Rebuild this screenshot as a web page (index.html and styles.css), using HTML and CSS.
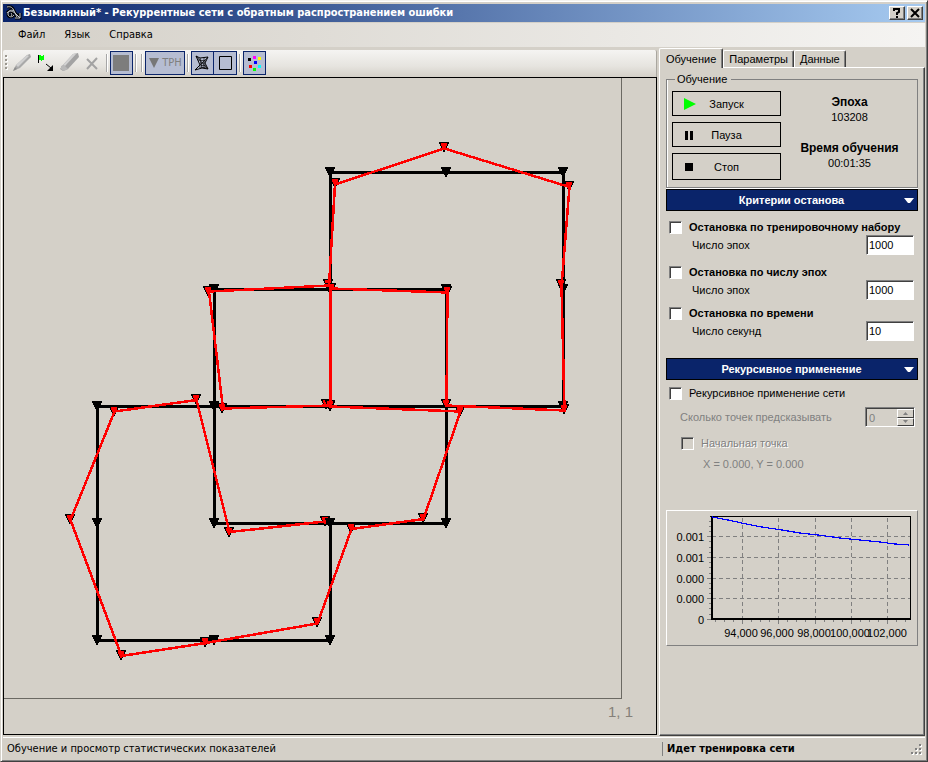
FILE: index.html
```html
<!DOCTYPE html>
<html lang="ru">
<head>
<meta charset="utf-8">
<title>Безымянный* - Рекуррентные сети с обратным распространением ошибки</title>
<link rel="stylesheet" href="styles.css">
</head>
<body>
<div class="window">
  <header class="titlebar">
    <svg class="app-icon" width="16" height="16" viewBox="0 0 16 16" fill="none" stroke="#000" stroke-width="3"><path id="swirl" d="M1 2c4-1 6 1 7 4l3 6M1 8c2-3 5-2 8 0M8 6c-3-2-6 0-6 3s4 4 6 1M5 8c1 1 1 2 0 3M9 8l5 5M14 8v5H9"/><use href="#swirl" stroke="#c8ccd4" stroke-width="1"/></svg>
    <h1 class="title">Безымянный* - Рекуррентные сети с обратным распространением ошибки</h1>
    <button class="caption-btn" type="button" aria-label="Справка"><svg width="12" height="10" viewBox="0 0 12 10" fill="none" stroke="#000" stroke-width="2"><path d="M3 3V1h5v3L6 5v2M5 9h2"/></svg></button>
    <button class="caption-btn" type="button" aria-label="Закрыть"><svg width="12" height="10" viewBox="0 0 12 10" stroke="#000" stroke-width="2"><path d="M2 1l8 8M10 1L2 9"/></svg></button>
  </header>
  <nav class="menubar">
    <button type="button">Файл</button>
    <button type="button">Язык</button>
    <button type="button">Справка</button>
  </nav>
  <main class="content">
    <section class="workspace">
      <div class="toolbar">
        <svg class="grip" width="4" height="18" viewBox="0 0 4 18"><path d="M2 2v15" stroke="#fff" stroke-width="2" stroke-dasharray="2 2"/><path d="M1 1v15" stroke="#9a978f" stroke-width="2" stroke-dasharray="2 2"/></svg>
        <button class="tool plain" type="button" aria-label="Карандаш"><svg width="24" height="24" viewBox="0 0 24 24"><path d="M3 20l3-6L17 4l3-1 1 3L10 17z" fill="#a9a9a9"/><path d="M6 14L17 4l2 1L8 16z" fill="#d0d0d0"/><path d="M3 20l2-4 2 2z" fill="#8d8d8d"/></svg></button>
        <button class="tool plain" type="button" aria-label="Начальная точка"><svg width="24" height="24" viewBox="0 0 24 24"><path d="M4.500 4v8" stroke="#000" fill="none"/><path d="M5 4h2v1h2V4h1v5H8v1H7V9H5z" fill="#0f0"/><path d="M12 13l5 4" stroke="#000" stroke-width="1"/><path d="M19 14v6h-6z"/></svg></button>
        <button class="tool plain" type="button" aria-label="Ластик"><svg width="24" height="24" viewBox="0 0 24 24"><path d="M4 15L15 3l5-1 1 4-11 12-5 2-3-2z" fill="#a3a3a3"/><path d="M5 14L15 3l4-1-12 13z" fill="#d2d2d2"/><path d="M3 15l3-1 4 4-4 2-3-2z" fill="#b9b9b9"/></svg></button>
        <button class="tool plain narrow" type="button" aria-label="Удалить"><svg width="16" height="24" viewBox="0 0 16 24"><path d="M2 8l10 10M12 7L2 18" stroke="#a3a3a3" stroke-width="2"/></svg></button>
        <span class="sep"></span>
        <button class="tool" type="button" aria-label="Заливка"><svg width="21" height="22" viewBox="0 0 21 22"><path d="M2 3h16v16H2z" fill="#7d7d7d"/></svg></button>
        <span class="sep"></span><span class="sep"></span>
        <button class="tool wide" type="button"><svg width="12" height="12" viewBox="0 0 12 12"><path d="M1 1h10L6 11z" fill="#777"/></svg><span>ТРН</span></button>
        <span class="sep"></span>
        <button class="tool" type="button" aria-label="Сеть"><svg width="21" height="22" viewBox="0 0 21 22" fill="none" stroke="#000"><path d="M4 4l4 2 8-1-3 6 3 6-6-1-7 2 5-5z"/><path stroke-width=".7" d="M4 4l12 13M16 5L3 18M8 6l2 10M12 6v10M8 13l6 1M6 8l8 1M7 15l8 1M8 11l5 0"/></svg></button>
        <button class="tool joined" type="button" aria-label="Рамка"><svg width="21" height="22" viewBox="0 0 21 22"><path d="M4.500 4.500h12v13h-12z" fill="none" stroke="#000"/></svg></button>
        <span class="sep"></span>
        <button class="tool" type="button" aria-label="Цвета"><svg width="21" height="22" viewBox="0 0 21 22"><path d="M4 6h3v3H4z"/><path d="M9 4h3v3H9z" fill="#f0f"/><path d="M14 5h3v3h-3z" fill="#ff0"/><path d="M10 9h3v3h-3z" fill="#00f"/><path d="M5 13h3v3H5z" fill="red"/><path d="M14 13h3v3h-3z" fill="#0ff"/><path d="M9 16h3v3H9z" fill="#0f0"/></svg></button>
      </div>
      <svg class="plot" viewBox="4 78 652 656" preserveAspectRatio="xMinYMin meet" role="img" aria-label="Траектории сети">
        <defs><path id="mark" d="M-5-4.500h9L-.5 5z"/></defs>
        <path d="M621.500 78v620.500H4" fill="none" stroke="#6b6963"/>
        <text x="608" y="717" class="plot-label">1, 1</text>
        <g fill="none" stroke="#000" stroke-width="3">
          <path d="M330.500 289.500v-117h233v234h-466v234h233v-117M214.500 289.500h232v234h-232zM330.500 289.500v117"/>
        </g>
        <g stroke="#000">
          <use href="#mark" x="330.500" y="172"/><use href="#mark" x="446.500" y="172"/><use href="#mark" x="563.500" y="172"/>
          <use href="#mark" x="214.500" y="289"/><use href="#mark" x="330.500" y="289"/><use href="#mark" x="446.500" y="289"/><use href="#mark" x="563.500" y="289"/>
          <use href="#mark" x="97.500" y="406"/><use href="#mark" x="214.500" y="406"/><use href="#mark" x="330.500" y="406"/><use href="#mark" x="563.500" y="406"/>
          <use href="#mark" x="97.500" y="523"/><use href="#mark" x="214.500" y="523"/><use href="#mark" x="446.500" y="523"/>
          <use href="#mark" x="97.500" y="640"/><use href="#mark" x="330.500" y="640"/>
        </g>
        <g stroke="#000" fill="red">
          <use href="#mark" x="444.500" y="147"/><use href="#mark" x="335.500" y="183"/><use href="#mark" x="569.500" y="186"/>
          <use href="#mark" x="561.500" y="284"/><use href="#mark" x="328.500" y="284"/><use href="#mark" x="331.500" y="288"/>
          <use href="#mark" x="447.500" y="291"/><use href="#mark" x="208.500" y="291"/>
          <use href="#mark" x="222.500" y="408"/><use href="#mark" x="326.500" y="404"/><use href="#mark" x="330.500" y="405"/>
          <use href="#mark" x="446.500" y="404"/><use href="#mark" x="564.500" y="409"/><use href="#mark" x="460.500" y="411"/>
          <use href="#mark" x="196.500" y="399"/><use href="#mark" x="114.500" y="411"/><use href="#mark" x="70.500" y="519"/>
          <use href="#mark" x="121.500" y="655"/><use href="#mark" x="205.500" y="642"/><use href="#mark" x="317.500" y="622"/>
          <use href="#mark" x="351.500" y="528"/><use href="#mark" x="423.500" y="518"/><use href="#mark" x="325.500" y="521"/>
          <use href="#mark" x="229.500" y="532"/>
        </g>
        <g stroke="#000"><use href="#mark" x="330.500" y="523"/><use href="#mark" x="214.500" y="640"/></g>
        <path fill="none" stroke="red" stroke-width="2.500" d="M325 521.500l-95.500 10.500-33-132-82 11.500-44 108.500 51 136 84-13 112-19.500 34-94.500 72-10 37-107.500-130-5v-118l117 4-1 113 118 5-3-124 8-99.500-125-38.500-109.500 36-6 101-120 6 14 117 108-3"/>
      </svg>
    </section>

    <aside class="side">
      <div class="tabs" role="tablist">
        <button class="tab active" type="button" role="tab" aria-selected="true">Обучение</button>
        <button class="tab" type="button" role="tab" aria-selected="false">Параметры</button>
        <button class="tab" type="button" role="tab" aria-selected="false">Данные</button>
      </div>
      <div class="page" role="tabpanel">
        <fieldset class="training">
          <legend>Обучение</legend>
          <div class="commands">
            <button type="button"><svg width="12" height="12" viewBox="0 0 12 12"><path d="M0 0l12 6-12 6z" fill="#0f0"/></svg><span>Запуск</span></button>
            <button type="button"><svg width="12" height="12" viewBox="0 0 12 12"><path d="M1 2h3v9H1zM6 2h3v9H6z"/></svg><span>Пауза</span></button>
            <button type="button" class="tall"><svg width="12" height="12" viewBox="0 0 12 12"><path d="M1 2h8v8H1z"/></svg><span>Стоп</span></button>
          </div>
          <dl class="stats">
            <dt>Эпоха</dt><dd>103208</dd>
            <dt>Время обучения</dt><dd>00:01:35</dd>
          </dl>
        </fieldset>

        <button class="section" type="button"><span>Критерии останова</span><svg width="10" height="7" viewBox="0 0 10 7"><path d="M0 1h10L6 6H4z" fill="#fff"/></svg></button>
        <div class="criteria">
          <div class="criterion">
            <label class="check bold"><input type="checkbox">Остановка по тренировочному набору</label>
            <div class="param"><label for="n1">Число эпох</label><input id="n1" type="text" value="1000"></div>
          </div>
          <div class="criterion short">
            <label class="check bold"><input type="checkbox">Остановка по числу эпох</label>
            <div class="param"><label for="n2">Число эпох</label><input id="n2" type="text" value="1000"></div>
          </div>
          <div class="criterion short">
            <label class="check bold"><input type="checkbox">Остановка по времени</label>
            <div class="param"><label for="n3">Число секунд</label><input id="n3" type="text" value="10"></div>
          </div>
        </div>

        <button class="section" type="button"><span>Рекурсивное применение</span><svg width="10" height="7" viewBox="0 0 10 7"><path d="M0 1h10L6 6H4z" fill="#fff"/></svg></button>
        <div class="recursive">
          <label class="check"><input type="checkbox">Рекурсивное применение сети</label>
          <div class="predict">
            <label for="count">Сколько точек предсказывать</label>
            <div class="spinner">
              <input id="count" type="text" value="0" disabled>
              <div class="steps">
                <button type="button" disabled aria-label="Больше"><svg width="5" height="3" viewBox="0 0 5 3"><path d="M0 3L2.500 0 5 3z" fill="#808080"/></svg></button>
                <button type="button" disabled aria-label="Меньше"><svg width="5" height="3" viewBox="0 0 5 3"><path d="M0 0l2.500 3L5 0z" fill="#808080"/></svg></button>
              </div>
            </div>
          </div>
          <label class="check origin"><input type="checkbox" disabled>Начальная точка</label>
          <p class="coords">X = 0.000, Y = 0.000</p>
        </div>

        <div class="chart">
          <svg viewBox="667 511 250 134" role="img" aria-label="График ошибки">
            <path d="M712 536.500h198M712 557.500h198M712 578.500h198M712 598.500h198M742.500 518v100M778.500 518v100M815.500 518v100M851.500 518v100M887.500 518v100" stroke="#808080" stroke-dasharray="4 3" fill="none"/>
            <path d="M707 536.500h4M707 557.500h4M707 578.500h4M707 598.500h4M707 619.500h4M742.500 620v4M778.500 620v4M815.500 620v4M851.500 620v4M887.500 620v4" stroke="#808080" fill="none"/>
            <path d="M715.500 620v2M724.500 620v2M733.500 620v2M751.500 620v2M760.500 620v2M769.500 620v2M787.500 620v2M796.500 620v2M805.500 620v2M824.500 620v2M833.500 620v2M842.500 620v2M860.500 620v2M869.500 620v2M878.500 620v2M896.500 620v2M905.500 620v2M709 521.500h2M709 526.500h2M709 531.500h2M709 541.500h2M709 547.500h2M709 552.500h2M709 562.500h2M709 567.500h2M709 573.500h2M709 583.500h2M709 588.500h2M709 593.500h2M709 603.500h2M709 608.500h2M709 614.500h2" stroke="#808080"/>
            <path d="M710 516.500h200.500V620" fill="none" stroke="#000"/>
            <path d="M711.500 516v102.500h199.500" fill="none" stroke="#000" stroke-width="2"/>
            <path d="M712 517l16 3 18 4 16 3 20 3 18 3 18 2 22 3 20 2 20 2 15 2 14 1" fill="none" stroke="#00f" stroke-width="1.200"/>
            <g text-anchor="end"><text x="704" y="541">0.001</text><text x="704" y="562">0.001</text><text x="704" y="583">0.000</text><text x="704" y="603">0.000</text><text x="704" y="624">0</text></g>
            <g text-anchor="middle"><text x="741" y="637">94,000</text><text x="777" y="637">96,000</text><text x="814" y="637">98,000</text><text x="850" y="637">100,000</text><text x="887" y="637">102,000</text></g>
          </svg>
        </div>
      </div>
    </aside>
  </main>
  <footer class="status">
    <span class="hint">Обучение и просмотр статистических показателей</span>
    <strong class="state">Идет тренировка сети</strong>
    <svg class="resize" width="12" height="12" viewBox="0 0 12 12"><path d="M9 1h2v2H9zM9 5h2v2H9zM5 5h2v2H5zM9 9h2v2H9zM5 9h2v2H5zM1 9h2v2H1z" fill="#fff"/><path d="M8 0h2v2H8zM8 4h2v2H8zM4 4h2v2H4zM8 8h2v2H8zM4 8h2v2H4zM0 8h2v2H0z" fill="#808080"/></svg>
  </footer>
</div>
</body>
</html>
```
FILE: styles.css
```css
:root {
  --face: #d4d0c8;
  --shade: #808080;
  --dark: #404040;
  --navy: #0a246a;
  --ui: "DejaVu Sans Condensed", "DejaVu Sans", sans-serif;
  --form: "Liberation Sans", Arial, sans-serif;
}
* { box-sizing: border-box; }
body {
  margin: 0;
  background: var(--face);
  color: #000;
  font: 11px/14px var(--form);
}
button, input { font: inherit; color: inherit; margin: 0; padding: 0; border-radius: 0; }
button { background: none; border: 0; }
svg { display: block; }

.window {
  min-height: 100vh;
  display: flex;
  flex-direction: column;
  padding: 1px 2px 1px 1px;
  border: 1px solid var(--face);
  border-top-color: #f4f3f0;
  border-right-color: var(--dark);
  border-bottom-color: var(--dark);
  border-left-color: var(--face);
  box-shadow: inset 1px 1px #fff, inset -1px -1px var(--shade);
}
.window > * { margin-left: 1px; }

/* Title bar */
.titlebar {
  margin-top: 2px;
  height: 18px;
  display: flex;
  align-items: center;
  gap: 1px;
  padding: 0 2px 0 3px;
  background: linear-gradient(90deg, var(--navy), #a6caf0);
}
.title {
  flex: 1;
  margin: 0;
  color: #fff;
  font: bold 11px/14px var(--ui);
  white-space: nowrap;
}
.caption-btn {
  width: 16px;
  height: 14px;
  display: grid;
  place-items: center;
  background: var(--face);
  border: 1px solid;
  border-color: #fff var(--dark) var(--dark) #fff;
  box-shadow: inset -1px -1px var(--shade);
}
.caption-btn + .caption-btn { margin-left: 1px; }

/* Menu */
.menubar {
  margin-top: 1px;
  height: 24px;
  display: flex;
  align-items: center;
  gap: 19px;
  padding-left: 15px;
  background: linear-gradient(90deg, var(--face), #f5f4f2);
  font-family: var(--ui);
}

.content { flex: 1; display: flex; gap: 2px; padding-bottom: 1px; }
.workspace { flex: 1; min-width: 0; display: flex; flex-direction: column; padding: 3px 0 1px; }

/* Toolbar */
.toolbar {
  height: 27px;
  display: flex;
  align-items: center;
  padding: 0 0 1px 2px;
  background: linear-gradient(#f5f4f2, #e6e4df 60%, #d4d0c8);
  border-right: 1px solid #a9a69f;
  border-radius: 2px 2px 0 0;
}
.grip { margin-right: 1px; }
.tool {
  width: 23px;
  height: 24px;
  display: flex;
  align-items: center;
  justify-content: center;
  background: #b6bdd2;
  border: 1px solid var(--navy);
}
.tool.plain { width: 24px; background: none; border: 0; }
.tool.narrow { width: 22px; }
.tool.wide { width: 40px; gap: 2px; color: #808080; }
.tool.wide span { font-family: var(--ui); }
.tool.joined { border-left: 0; }
.sep {
  width: 2px;
  height: 18px;
  margin: 0 2px;
  border-left: 1px solid #a6a6a6;
  border-right: 1px solid #fff;
}
.plot { flex: 1; width: 100%; min-height: 0; border: 1px solid #000; shape-rendering: crispEdges; }
.plot-label { font: 15px var(--form); fill: #858079; }

/* Tabs */
.side { width: 266px; display: flex; flex-direction: column; }
.tabs { display: flex; align-items: flex-end; height: 19px; margin-top: 1px; }
.tab {
  height: 17px;
  padding: 0 5px;
  border: 1px solid;
  border-color: #fff var(--dark) transparent #fff;
  border-bottom: 0;
  border-radius: 2px 2px 0 0;
  box-shadow: inset -1px 0 var(--shade);
}
.tab.active { height: 20px; padding: 0 6px; margin-bottom: -1px; position: relative; background: var(--face); }
.page {
  flex: 1;
  padding: 4px 6px 0;
  border: 1px solid;
  border-color: #fff var(--dark) var(--dark) #fff;
  box-shadow: inset -1px -1px var(--shade);
}

/* Training group */
.training {
  margin: 0;
  min-width: 0;
  padding: 5px 5px 7px;
  display: flex;
  border: 1px solid var(--shade);
  box-shadow: inset 1px 0 #fff, 0 1px #fff;
}
.training legend { margin-left: 3px; padding: 0 4px 0 2px; }
.commands { width: 109px; display: grid; gap: 6px; }
.commands button {
  height: 25px;
  display: grid;
  grid-template-columns: 12px 1fr 12px;
  align-items: center;
  padding: 0 11px;
  border: 1px solid #000;
}
.commands .tall { height: 27px; }
.stats { flex: 1; margin: 4px 0 0; padding-left: 6px; text-align: center; line-height: 15px; }
.stats dt { font-weight: bold; font-size: 12px; }
.stats dd { margin: 0 0 16px; }
.stats dd:last-child { margin: 0; }

/* Section bars */
.section {
  width: 100%;
  height: 22px;
  display: grid;
  grid-template-columns: 1fr 10px;
  align-items: center;
  padding: 0 3px 0 12px;
  background: var(--navy);
  border: 1px solid #000;
  color: #fff;
  font: bold 11px/14px var(--form);
}
.training + .section { margin-top: 1px; }

/* Checkboxes and fields */
.check { display: flex; align-items: center; gap: 7px; white-space: nowrap; }
.check.bold { font-weight: bold; }
.check input {
  appearance: none;
  flex: none;
  width: 13px;
  height: 13px;
  background: #fff;
  border: 1px solid;
  border-color: var(--shade) #fff #fff var(--shade);
  box-shadow: inset 1px 1px var(--dark);
}
.check input:disabled { background: var(--face); }
.criteria { padding: 9px 4px 11px 3px; }
.criterion { height: 45px; }
.criterion.short { height: 41px; }
.param { display: flex; justify-content: space-between; align-items: center; margin-top: 1px; padding-left: 23px; }
.param input, .spinner {
  width: 48px;
  height: 20px;
  background: #fff;
  border: 1px solid;
  border-color: var(--shade) #fff #fff var(--shade);
  box-shadow: inset 1px 1px var(--dark);
}
.param input { padding-left: 2px; }

.recursive { padding: 6px 3px 0; }
.predict { display: flex; justify-content: space-between; align-items: center; padding-left: 11px; margin-top: 7px; color: #808080; }
.spinner { width: 50px; display: flex; padding: 1px 0 0 1px; background: var(--face); }
.spinner input { width: 30px; min-width: 0; padding-left: 2px; background: none; border: 0; color: #808080; }
.steps { flex: 1; display: grid; grid-template-rows: 1fr 1fr; }
.steps button {
  display: grid;
  place-items: center;
  border: 1px solid;
  border-color: #fff var(--dark) var(--dark) #fff;
}
.origin { margin: 9px 0 0 12px; color: #808080; text-shadow: 1px 1px #fff; }
.coords { margin: 7px 0 0 34px; color: #808080; }

.chart {
  margin-top: 39px;
  border: 1px solid;
  border-color: #fff var(--shade) var(--shade) #fff;
}
.chart svg { width: 100%; shape-rendering: crispEdges; }
.chart text { font: 11px var(--form); }

/* Status bar */
.status {
  height: 23px;
  display: flex;
  align-items: center;
  border-top: 1px solid #fff;
  padding: 0 2px 0 4px;
  font-family: var(--ui);
}
.hint { flex: 1; }
.state { width: 249px; padding-left: 4px; border-left: 1px solid var(--shade); }
.resize { align-self: flex-end; margin-bottom: 4px; }
```
